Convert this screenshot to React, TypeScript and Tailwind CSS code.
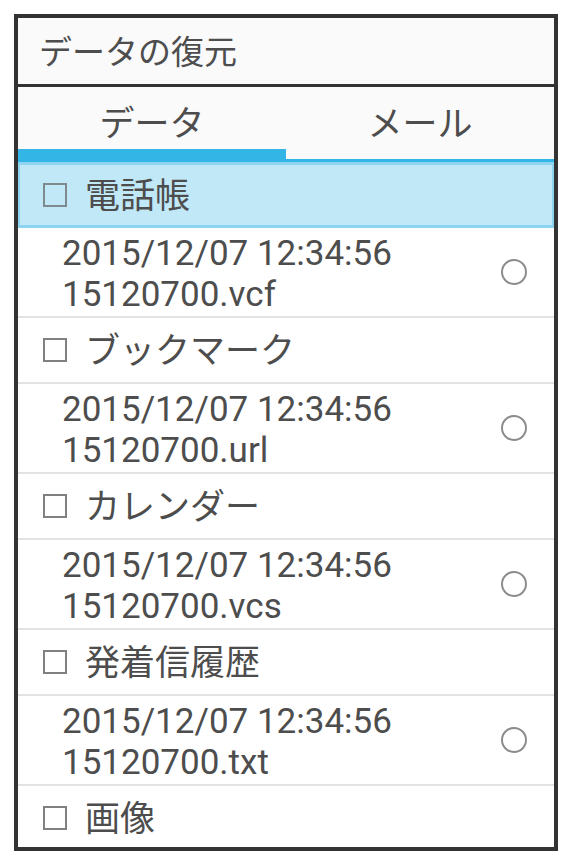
const font = { fontFamily: 'Roboto, "Noto Sans CJK JP", sans-serif' };

type Row =
  | { kind: "cat"; label: string; selected?: boolean }
  | { kind: "file"; date: string; name: string };

const rows: Row[] = [
  { kind: "cat", label: "電話帳", selected: true },
  { kind: "file", date: "2015/12/07 12:34:56", name: "15120700.vcf" },
  { kind: "cat", label: "ブックマーク" },
  { kind: "file", date: "2015/12/07 12:34:56", name: "15120700.url" },
  { kind: "cat", label: "カレンダー" },
  { kind: "file", date: "2015/12/07 12:34:56", name: "15120700.vcs" },
  { kind: "cat", label: "発着信履歴" },
  { kind: "file", date: "2015/12/07 12:34:56", name: "15120700.txt" },
  { kind: "cat", label: "画像" },
];

function CategoryRow({ label, selected }: { label: string; selected?: boolean }) {
  if (selected) {
    return (
      <div className="flex h-[66px] shrink-0 items-center border-x-2 border-y-[3px] border-[#8dd4f0] bg-[#c1e8f7] pl-[23px]">
        <div className="h-6 w-6 border-2 border-[#7f8a8f]" />
        <span className="ml-[18px] pt-[2px] text-[35px] leading-none text-[#4d4d4d]">{label}</span>
      </div>
    );
  }
  return (
    <div className="flex h-[66px] shrink-0 items-center border-b-2 border-[#e3e3e3] bg-white pl-[25px]">
      <div className="h-6 w-6 border-2 border-[#808080]" />
      <span className="ml-[18px] pt-[2px] text-[35px] leading-none text-[#4d4d4d]">{label}</span>
    </div>
  );
}

function FileRow({ date, name }: { date: string; name: string }) {
  return (
    <div className="flex h-[90px] shrink-0 items-center justify-between border-b-2 border-[#e3e3e3] bg-white pl-[44px] pr-[27px]">
      <div className="pt-[3px] text-[35px] leading-[41px] text-[#4d4d4d]">
        <div>{date}</div>
        <div>{name}</div>
      </div>
      <div className="h-[26px] w-[26px] rounded-full border-2 border-[#8c8c8c]" />
    </div>
  );
}

export default function App() {
  return (
    <div className="h-[864px] w-[570px] bg-white p-[14px]" style={font}>
      <div className="flex h-[837px] w-[544px] flex-col overflow-hidden border-4 border-[#333333] bg-white">
        {/* Title */}
        <div className="flex h-[66px] shrink-0 items-center bg-[#fafafa] pl-[21px]">
          <span className="pt-[2px] text-[33px] leading-none text-[#4d4d4d]">データの復元</span>
        </div>
        <div className="h-[3px] shrink-0 bg-[#333333]" />

        {/* Tabs */}
        <div className="relative flex h-[75px] shrink-0 border-b-[3px] border-[#33b5e5] bg-[#fafafa]">
          <div className="flex flex-1 items-center justify-center">
            <span className="pt-[2px] text-[35px] leading-none text-[#4d4d4d]">データ</span>
          </div>
          <div className="flex flex-1 items-center justify-center">
            <span className="pt-[2px] text-[35px] leading-none text-[#4d4d4d]">メール</span>
          </div>
          <div className="absolute bottom-0 left-0 h-[10px] w-1/2 bg-[#33b5e5]" />
        </div>

        {/* List */}
        <div className="flex flex-col">
          {rows.map((r, i) =>
            r.kind === "cat" ? (
              <CategoryRow key={i} label={r.label} selected={r.selected} />
            ) : (
              <FileRow key={i} date={r.date} name={r.name} />
            )
          )}
        </div>
      </div>
    </div>
  );
}
